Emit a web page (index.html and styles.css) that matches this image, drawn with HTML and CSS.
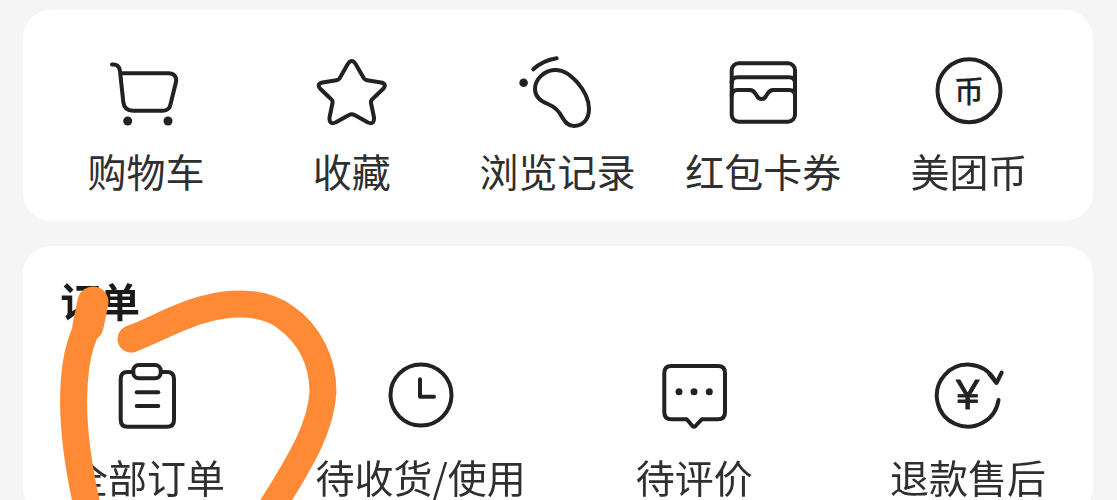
FILE: index.html
```html
<!DOCTYPE html>
<html lang="zh-CN">
<head>
  <meta charset="UTF-8" />
  <meta name="viewport" content="width=device-width, initial-scale=1.0"/>
  <title>我的</title>
  <link rel="stylesheet" href="styles.css">
</head>
<body>
  <div class="page">
    <section class="card tools">
      <a class="entry">
        <svg class="icon" viewBox="0 0 72 72">
          <path d="M2 8.5C7 8 9.5 10 10 15L13.3 46C14 52 17 54.7 23 54.7H53C57.5 54.7 60 52 60.7 47.5L66 26C67 20.5 64 17.3 58.5 17.3H10.7"/>
          <circle class="solid" cx="17.7" cy="65" r="4.5"/>
          <circle class="solid" cx="58" cy="65" r="4.5"/>
        </svg>
        <span>购物车</span>
      </a>
      <a class="entry">
        <svg class="icon" viewBox="0 0 72 72">
          <path d="M31.8 8Q35.7 2 39.6 8L48 22.5Q49 24 51 24.3L65 26.5Q71.5 28 67 33L56.5 43Q54.5 44.5 55 47L58 61.5Q58.5 69 52 66.5L38.5 59Q35.7 57.5 33 59L19.5 66.5Q13 69 13.5 61.5L16.5 47Q17 44.5 15 43L4.5 33Q0 28 6.5 26.5L20.5 24.3Q22.5 24 23.5 22.5Z"/>
        </svg>
        <span>收藏</span>
      </a>
      <a class="entry">
        <svg class="icon" viewBox="0 0 72 72">
          <path d="M12.3 13.3C18 8 25 4 35.7 2.3"/>
          <circle class="solid" cx="2.6" cy="26.7" r="4.3"/>
          <path d="M33 14C43 13 50 20 56 26C63 34 68 43 68 53C68 63 62 70 53 70C47 70 44 66 41 61C38 55 34 51 27 48C19 45 14 41 14 33C14 23 23 15 33 14Z"/>
        </svg>
        <span>浏览记录</span>
      </a>
      <a class="entry">
        <svg class="icon" viewBox="0 0 72 72">
          <rect x="4.7" y="7.3" width="63.3" height="58.4" rx="7"/>
          <path d="M4.7 27Q4.7 21.3 10.5 21.3H62Q68 21.3 68 27"/>
          <path d="M4.7 40Q4.7 34 10.5 34H23C27 34 28 37 30 40C32 44 37 44 39 40C41 37 42 34 46 34H62Q68 34 68 40"/>
        </svg>
        <span>红包卡券</span>
      </a>
      <a class="entry">
        <svg class="icon" viewBox="0 0 72 72">
          <circle cx="36" cy="34.7" r="31.5"/>
          <text class="glyph" x="36" y="45.5">币</text>
        </svg>
        <span>美团币</span>
      </a>
    </section>

    <section class="card orders">
      <h2>订单</h2>
      <div class="order-row">
        <a class="entry">
          <svg class="icon" viewBox="0 0 72 72">
            <path d="M22 13H16.7Q9.7 13 9.7 20V60.7Q9.7 67.7 16.7 67.7H56Q63 67.7 63 60.7V20Q63 13 56 13H50"/>
            <rect x="22.3" y="6" width="27.4" height="13.3" rx="5.5"/>
            <path d="M25.7 33.3H47.3"/>
            <path d="M25.7 47H47.3"/>
          </svg>
          <span>全部订单</span>
        </a>
        <a class="entry">
          <svg class="icon" viewBox="0 0 72 72">
            <circle cx="36" cy="36" r="30.5"/>
            <path d="M35 20.3V37.7H49"/>
          </svg>
          <span>待收货/使用</span>
        </a>
        <a class="entry">
          <svg class="icon" viewBox="0 0 72 72">
            <path d="M13.3 7H60Q67 7 67 14V53.3Q67 60.3 60 60.3H43.7L37.5 67Q36 68.5 34.5 67L28.7 60.3H13.3Q6.3 60.3 6.3 53.3V14Q6.3 7 13.3 7Z"/>
            <circle class="solid" cx="21" cy="32.7" r="3.5"/>
            <circle class="solid" cx="36" cy="32.7" r="3.5"/>
            <circle class="solid" cx="51.3" cy="32.7" r="3.5"/>
          </svg>
          <span>待评价</span>
        </a>
        <a class="entry">
          <svg class="icon" viewBox="0 0 72 72">
            <path d="M62 20A31 31 0 1 0 66.5 41"/>
            <path d="M57.3 15L64.5 24L69.7 13.5"/>
            <text class="yen" x="35.7" y="50">¥</text>
          </svg>
          <span>退款售后</span>
        </a>
      </div>
    </section>
  </div>

  <!-- hand drawn marker circle on top of the screenshot -->
  <svg class="scribble" viewBox="0 0 1117 500">
    <path class="blob" d="M93 302L88 326"/>
    <path d="M90 320C84 335 79 345 76 365C71 400 74 450 88 510"/>
    <path d="M131 339C155 330 180 315 205 309C235 301 265 302 285 317C310 334 323 362 323 392C321 425 305 455 270 510"/>
  </svg>
</body>
</html>
```

FILE: styles.css
```css
* {
  box-sizing: border-box;
}

body {
  margin: 0;
  height: 500px;
  overflow: hidden;
  position: relative;
  background: #f5f5f5;
  color: #2f2f2f;
  font-family: "Noto Sans CJK SC", "Noto Sans", sans-serif;
}

.page {
  display: flex;
  flex-direction: column;
  gap: 25px;
  padding: 10px 24px 0 23px;
  filter: blur(0.5px);
}

.card {
  background: white;
  border-radius: 28px;
}

.tools {
  display: grid;
  grid-template-columns: repeat(5, 1fr);
  padding: 46px 21px 31px 20px;
}

.orders {
  padding: 26px 47px 20px 46px;
}

h2 {
  margin: 0 0 31px -9px;
  font-size: 40px;
  line-height: 56px;
  font-weight: 700;
  color: #1a1a1a;
}

.order-row {
  display: flex;
  justify-content: space-between;
}

.entry {
  display: flex;
  flex-direction: column;
  align-items: center;
  gap: 22px;
  width: 156px;
  justify-self: center;
  font-size: 39px;
  line-height: 40px;
  white-space: nowrap;
}

.order-row .entry {
  gap: 25px;
}

.icon {
  display: block;
  width: 72px;
  height: 72px;
  overflow: visible;
  fill: none;
  stroke: #222;
  stroke-width: 4;
  stroke-linecap: round;
  stroke-linejoin: round;
}

.icon .solid {
  fill: #222;
  stroke: none;
}

.glyph,
.yen {
  fill: #222;
  stroke: none;
  text-anchor: middle;
}

.glyph {
  font-size: 30px;
  font-weight: 500;
}

.yen {
  font-family: "Liberation Sans", sans-serif;
  font-size: 42px;
  stroke: #222;
  stroke-width: 0.8;
}

.scribble {
  position: absolute;
  top: 0;
  left: 0;
  width: 1117px;
  height: 500px;
  fill: none;
  stroke: #fe8a35;
  stroke-width: 27;
  stroke-linecap: round;
  stroke-linejoin: round;
}

.scribble .blob {
  stroke-width: 31;
}
```
